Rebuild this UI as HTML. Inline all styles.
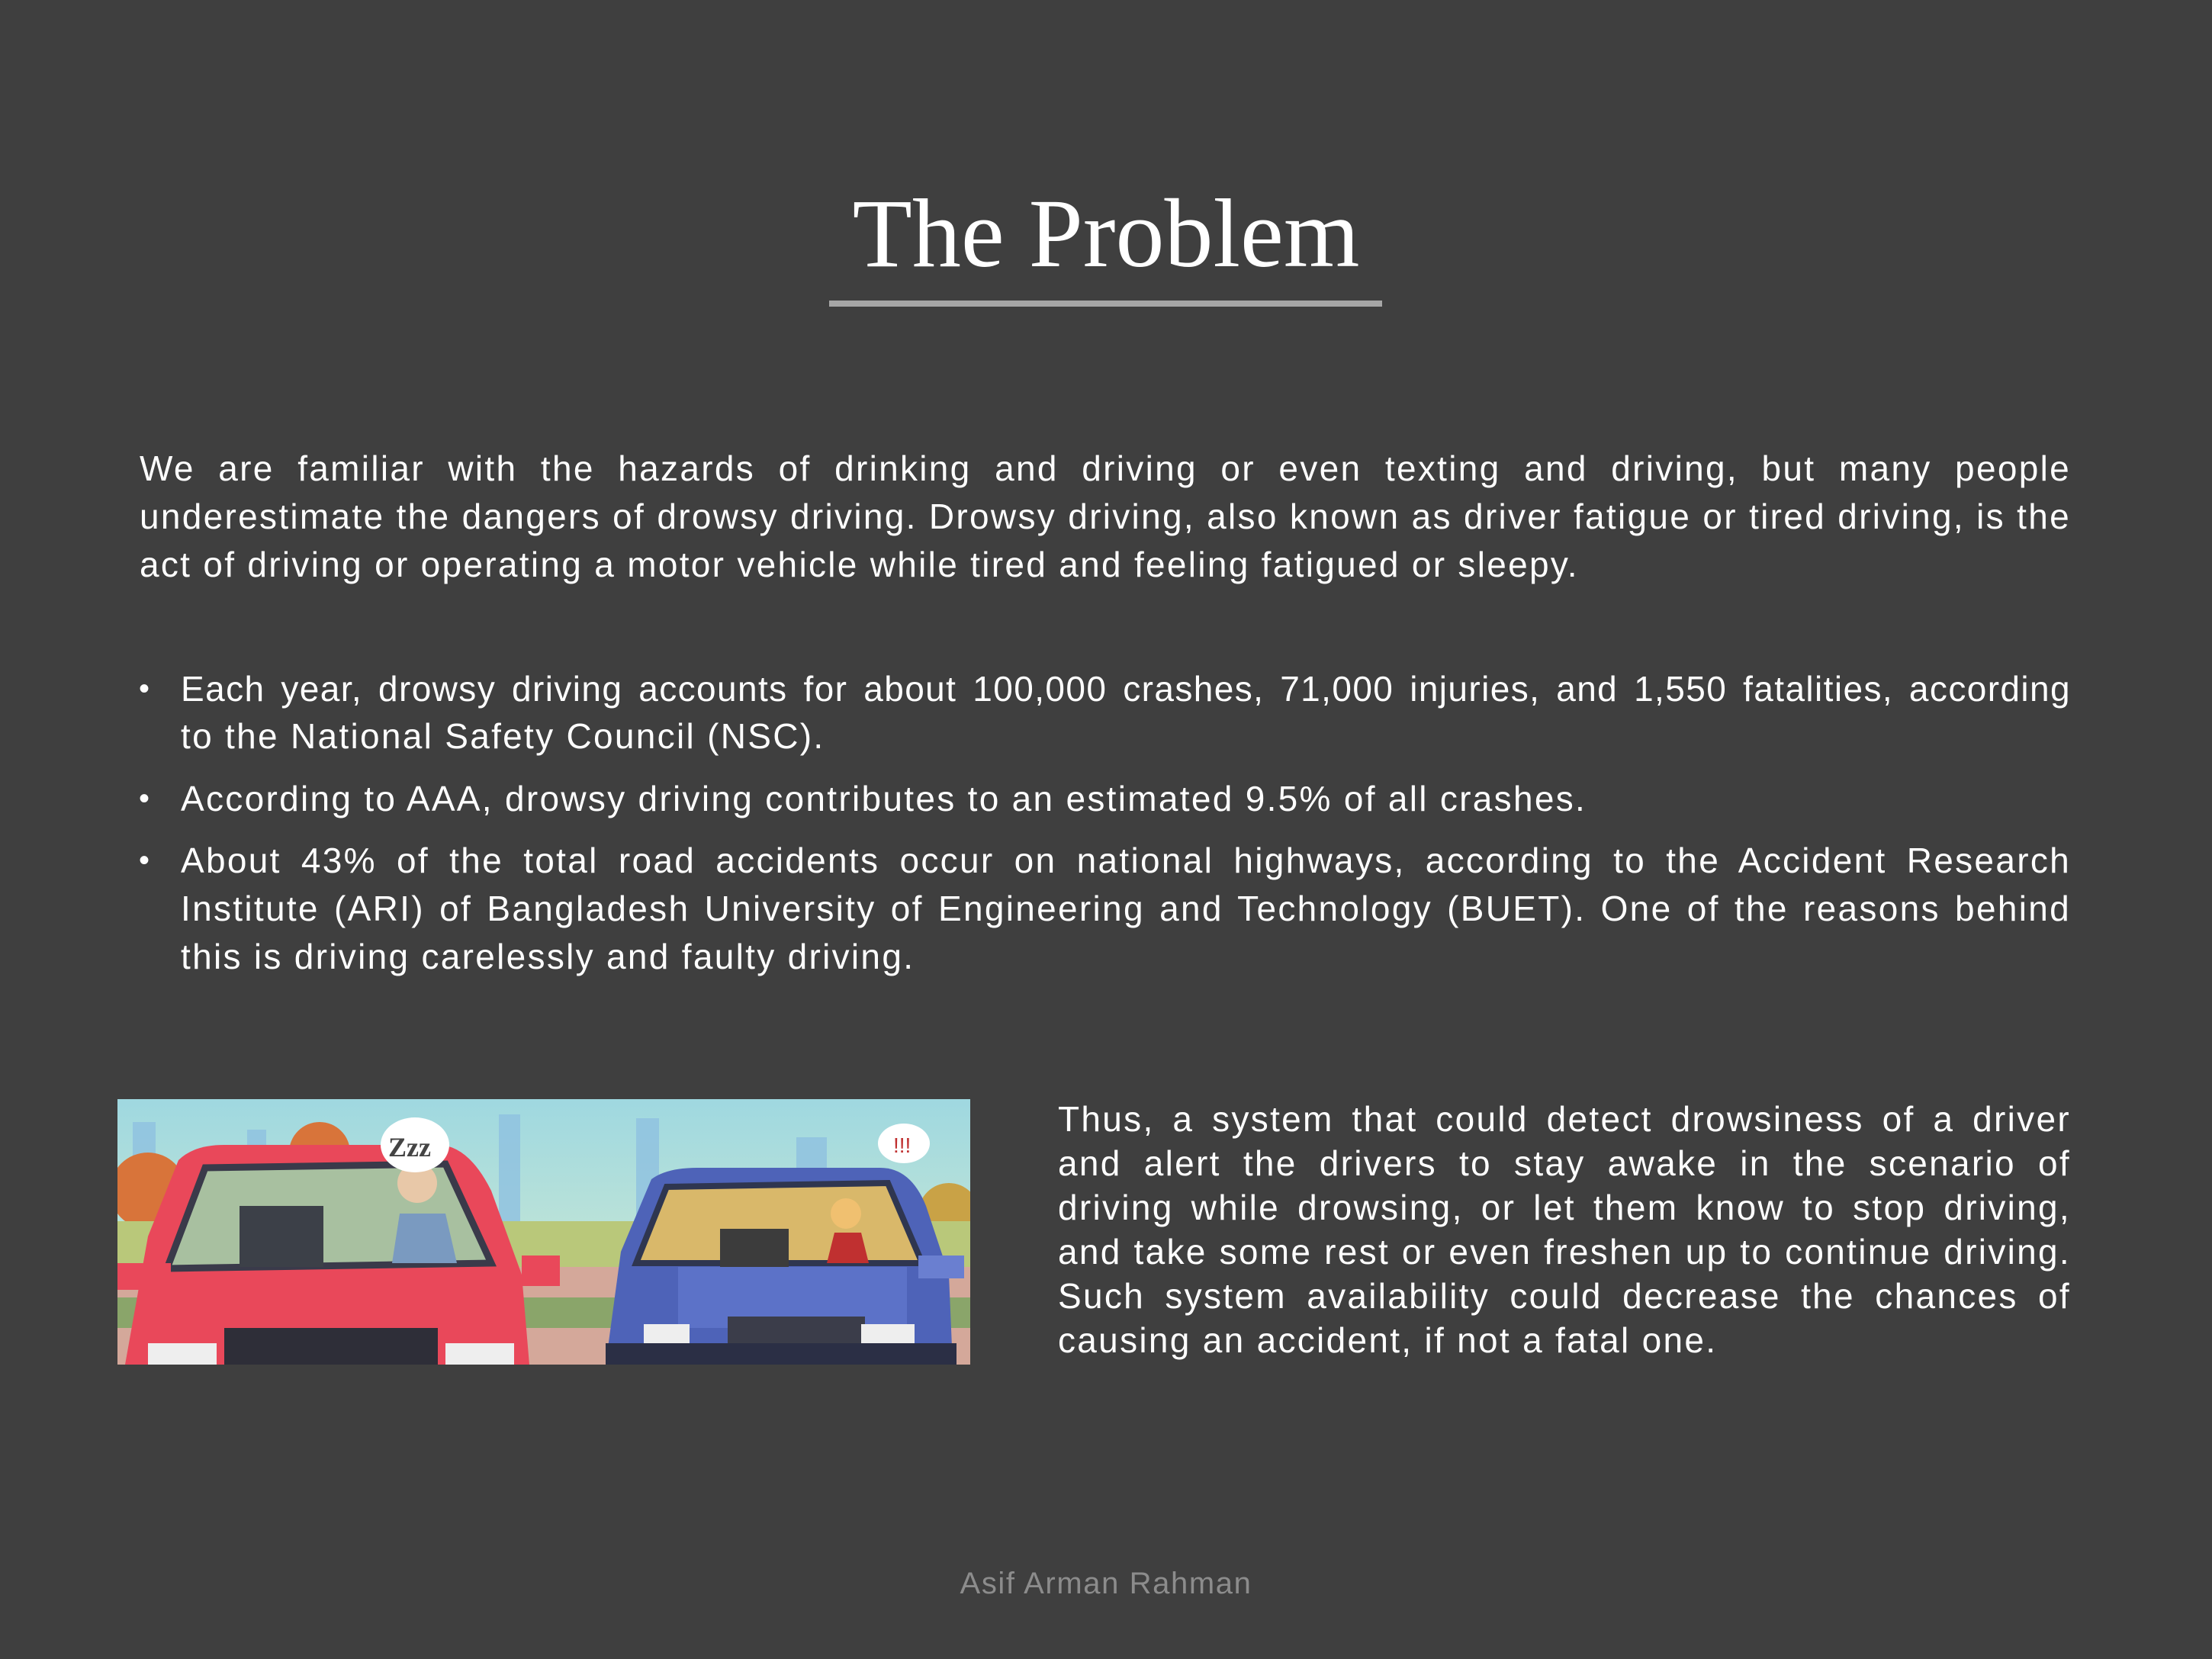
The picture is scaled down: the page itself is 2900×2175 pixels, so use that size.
<!DOCTYPE html>
<html><head><meta charset="utf-8"><style>
html,body{margin:0;padding:0;background:#3f3f3f;}
body{width:2900px;height:2175px;position:relative;overflow:hidden;font-family:"Liberation Sans",sans-serif;color:#fff;}
.t{position:absolute;left:0;width:2900px;text-align:center;font-family:"Liberation Serif",serif;font-size:128px;line-height:128px;top:242px;}
.ul{position:absolute;left:1087px;top:394px;width:725px;height:8px;background:#a6a6a6;}
.l{position:absolute;font-size:46px;line-height:46px;white-space:nowrap;letter-spacing:2.3px;}
.j{text-align:justify;text-align-last:justify;white-space:normal;}
.b{position:absolute;left:182px;font-size:40px;line-height:46px;}
.f{position:absolute;left:0;width:2900px;text-align:center;font-size:40px;line-height:40px;color:#8c8c8c;top:2056px;letter-spacing:1.6px;}
</style></head><body>
<div class="t">The Problem</div>
<div class="ul"></div>

<div class="l j" style="left:183px;width:2532px;top:591px">We are familiar with the hazards of drinking and driving or even texting and driving, but many people</div>
<div class="l j" style="left:183px;width:2532px;top:654px">underestimate the dangers of drowsy driving. Drowsy driving, also known as driver fatigue or tired driving, is the</div>
<div class="l" style="left:183px;top:717px">act of driving or operating a motor vehicle while tired and feeling fatigued or sleepy.</div>

<div class="b" style="top:880px">•</div>
<div class="l j" style="left:237px;width:2478px;top:880px;letter-spacing:1.4px">Each year, drowsy driving accounts for about 100,000 crashes, 71,000 injuries, and 1,550 fatalities, according</div>
<div class="l" style="left:237px;top:942px">to the National Safety Council (NSC).</div>
<div class="b" style="top:1024px">•</div>
<div class="l" style="left:237px;top:1024px">According to AAA, drowsy driving contributes to an estimated 9.5% of all crashes.</div>
<div class="b" style="top:1105px">•</div>
<div class="l j" style="left:237px;width:2478px;top:1105px">About 43% of the total road accidents occur on national highways, according to the Accident Research</div>
<div class="l j" style="left:237px;width:2478px;top:1168px">Institute (ARI) of Bangladesh University of Engineering and Technology (BUET). One of the reasons behind</div>
<div class="l" style="left:237px;top:1231px">this is driving carelessly and faulty driving.</div>

<svg style="position:absolute;left:154px;top:1441px" width="1118" height="348" viewBox="0 0 1118 348">
<defs><linearGradient id="sky" x1="0" y1="0" x2="0" y2="1"><stop offset="0" stop-color="#9fd8e0"/><stop offset="1" stop-color="#d7edd0"/></linearGradient></defs>
<rect width="1118" height="348" fill="url(#sky)"/>
<g fill="#8ec0e0" opacity=".8"><rect x="20" y="30" width="30" height="130"/><rect x="170" y="40" width="25" height="120"/><rect x="500" y="20" width="28" height="140"/><rect x="680" y="25" width="30" height="140"/><rect x="890" y="50" width="40" height="110"/></g>
<g fill="#d8743a"><circle cx="40" cy="120" r="50"/><circle cx="265" cy="70" r="40"/><circle cx="130" cy="140" r="45" fill="#c9a246"/><circle cx="1090" cy="150" r="40" fill="#c9a246"/><circle cx="860" cy="150" r="40" fill="#d4a040"/></g>
<rect y="160" width="1118" height="60" fill="#b9c87a"/>
<rect y="220" width="1118" height="128" fill="#d4a89a"/>
<rect y="260" width="1118" height="40" fill="#8aa56a"/>
<path d="M640 348 L660 200 L700 105 Q720 90 760 90 L1000 90 Q1040 90 1060 140 L1090 230 L1095 348 Z" fill="#4e63b8"/>
<path d="M680 215 L720 115 L1010 110 L1055 215 Z" fill="#d9b86a" stroke="#2f3650" stroke-width="8"/>
<rect x="790" y="170" width="90" height="55" fill="#3c3c3c"/>
<circle cx="955" cy="150" r="20" fill="#f0c070"/><path d="M930 215 L940 175 L975 175 L985 215Z" fill="#c03030"/>
<rect x="735" y="220" width="300" height="80" fill="#5c72c8"/>
<rect x="800" y="285" width="180" height="40" fill="#3b3d4a"/>
<rect x="690" y="295" width="60" height="30" fill="#eee"/><rect x="975" y="295" width="70" height="30" fill="#eee"/>
<rect x="640" y="320" width="460" height="28" fill="#2b2f45"/>
<rect x="1050" y="205" width="60" height="30" fill="#6a7fd0"/>
<ellipse cx="1031" cy="58" rx="34" ry="26" fill="#fff"/><text x="1017" y="70" font-size="28" fill="#c03030" font-family="Liberation Sans">!!!</text>
<path d="M10 348 L40 180 L80 80 Q100 60 140 60 L420 60 Q460 60 490 120 L530 230 L540 348 Z" fill="#e9485a"/>
<path d="M65 222 L115 90 L430 85 L490 215 Z" fill="#a8c0a0" stroke="#3a3a4a" stroke-width="9"/>
<rect x="160" y="140" width="110" height="80" fill="#3c4048"/>
<circle cx="393" cy="110" r="26" fill="#e8c8a8"/><path d="M360 215 L370 150 L430 150 L445 215Z" fill="#7a9ac0"/>
<rect x="0" y="215" width="70" height="35" fill="#e9485a"/><rect x="530" y="205" width="50" height="40" fill="#e9485a"/>
<rect x="140" y="300" width="280" height="48" fill="#2e2e38"/>
<rect x="40" y="320" width="90" height="28" fill="#eee"/><rect x="430" y="320" width="90" height="28" fill="#eee"/>
<ellipse cx="390" cy="60" rx="45" ry="36" fill="#fff"/><text x="355" y="75" font-size="36" font-weight="bold" fill="#444" font-family="Liberation Serif">Zzz</text>
</svg>

<div class="l j" style="left:1387px;width:1328px;top:1444px">Thus, a system that could detect drowsiness of a driver</div>
<div class="l j" style="left:1387px;width:1328px;top:1502px">and alert the drivers to stay awake in the scenario of</div>
<div class="l j" style="left:1387px;width:1328px;top:1560px">driving while drowsing, or let them know to stop driving,</div>
<div class="l j" style="left:1387px;width:1328px;top:1618px">and take some rest or even freshen up to continue driving.</div>
<div class="l j" style="left:1387px;width:1328px;top:1676px">Such system availability could decrease the chances of</div>
<div class="l" style="left:1387px;top:1734px">causing an accident, if not a fatal one.</div>

<div class="f">Asif Arman Rahman</div>
</body></html>
